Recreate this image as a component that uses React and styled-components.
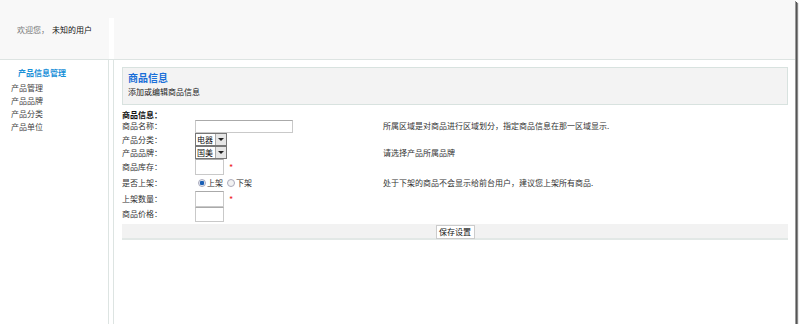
import React from 'react'
import styled, { createGlobalStyle } from 'styled-components'

const GlobalStyle = createGlobalStyle`
  html, body {
    margin: 0;
    padding: 0;
    background: #fff;
  }
  body {
    font-family: "Noto Sans CJK SC", "Noto Sans", sans-serif;
    font-size: 8px;
    color: #333;
  }
`

const Frame = styled.div`
  width: 795px;
  height: 324px;
  display: flex;
  flex-direction: column;
  background: #fff;
  box-shadow: 1px 1px 0 #9a9a9a, 2px 2px 0 #555, 3px 3px 1px #888;
  overflow: hidden;
`

const Header = styled.div`
  height: 59px;
  flex: none;
  display: grid;
  grid-template-columns: 109px 5px 1fr;
  background: #f8f8f8;
  border-bottom: 1px solid #dde4e2;
`

const Welcome = styled.div`
  padding: 25px 0 0 17px;
  line-height: 10px;
  color: #777;
  white-space: nowrap;
`

const UserName = styled.span`
  margin-left: 3px;
  color: #111;
`

const HeaderGap = styled.div`
  margin-top: 18px;
  background: #fff;
`

const Body = styled.div`
  flex: 1;
  display: flex;
  min-height: 0;
`

const Sidebar = styled.div`
  width: 108px;
  flex: none;
  border-right: 1px solid #dde4e2;
  padding-top: 7px;
`

const SideTitle = styled.div`
  padding-left: 18px;
  line-height: 12px;
  font-weight: bold;
  color: #1a90d8;
  margin-bottom: 2px;
`

const SideItem = styled.div`
  padding-left: 11px;
  line-height: 13px;
  color: #444;
`

const Main = styled.div`
  flex: 1;
  margin-left: 4px;
  border-left: 1px solid #dde4e2;
  padding: 7px 7px 0 8px;
`

const TitleBox = styled.div`
  height: 38px;
  box-sizing: border-box;
  background: #f3f3f3;
  border: 1px solid #d8e2df;
  padding: 4px 5px 0 5px;
`

const Title = styled.div`
  font-size: 10px;
  line-height: 12px;
  font-weight: bold;
  color: #1a6fd8;
`

const Subtitle = styled.div`
  margin-top: 3px;
  line-height: 10px;
  color: #222;
`

const FormHead = styled.div`
  margin-top: 5px;
  line-height: 9px;
  font-weight: bold;
  color: #111;
`

const Row = styled.div`
  display: grid;
  grid-template-columns: 73px 188px 1fr;
  align-items: center;
  height: ${p => p.$h}px;
`

const Label = styled.div`
  line-height: 10px;
  color: #333;
`

const Field = styled.div`
  display: flex;
  align-items: center;
  gap: 4px;
`

const Hint = styled.div`
  line-height: 10px;
  color: #333;
  white-space: nowrap;
`

const TextInput = styled.div`
  width: ${p => p.$w}px;
  height: ${p => p.$h}px;
  box-sizing: border-box;
  border: 1px solid #c9c9c9;
  border-top-color: #aaa;
  background: #fff;
`

const Star = styled.span`
  color: #e22;
  font-size: 9px;
  line-height: 9px;
  margin-left: 1px;
`

const SelectBox = styled.div`
  width: 32px;
  height: 13px;
  box-sizing: border-box;
  border: 1px solid #777;
  display: flex;
  background: #fff;
`

const SelectText = styled.div`
  flex: 1;
  line-height: 11px;
  padding-left: 1px;
  color: #111;
`

const SelectBtn = styled.div`
  width: 10px;
  background: #e6e6e6;
  border-left: 1px solid #aaa;
  display: flex;
  align-items: center;
  justify-content: center;
  &::after {
    content: '';
    border-left: 3px solid transparent;
    border-right: 3px solid transparent;
    border-top: 3px solid #222;
  }
`

const RadioGroup = styled.div`
  display: flex;
  align-items: center;
  padding-left: 3px;
`

const Radio = styled.span`
  width: 8px;
  height: 8px;
  box-sizing: border-box;
  border-radius: 50%;
  border: 1px solid #aab;
  background: ${p => (p.$on ? 'radial-gradient(circle, #1a5fb4 0 2px, #dfe8f5 2.5px)' : '#f2f2f2')};
  margin-right: 1px;
`

const RadioLabel = styled.span`
  line-height: 10px;
  color: #333;
  margin-right: 4px;
`

const ButtonBar = styled.div`
  margin-top: 2px;
  height: 16px;
  box-sizing: border-box;
  background: #f2f2f2;
  border-bottom: 2px solid #e2e8e6;
  display: flex;
  justify-content: center;
  align-items: flex-start;
  padding-top: 1px;
`

const SaveButton = styled.div`
  width: 39px;
  height: 14px;
  box-sizing: border-box;
  border: 1px solid #ccc;
  background: #fff;
  line-height: 12px;
  text-align: center;
  color: #111;
`

const Select = ({ value }) => (
  <SelectBox>
    <SelectText>{value}</SelectText>
    <SelectBtn />
  </SelectBox>
)

export default function App() {
  return (
    <>
      <GlobalStyle />
      <Frame>
        <Header>
          <Welcome>
            欢迎您，<UserName>未知的用户</UserName>
          </Welcome>
          <HeaderGap />
          <div />
        </Header>
        <Body>
          <Sidebar>
            <SideTitle>产品信息管理</SideTitle>
            <SideItem>产品管理</SideItem>
            <SideItem>产品品牌</SideItem>
            <SideItem>产品分类</SideItem>
            <SideItem>产品单位</SideItem>
          </Sidebar>
          <Main>
            <TitleBox>
              <Title>商品信息</Title>
              <Subtitle>添加或编辑商品信息</Subtitle>
            </TitleBox>
            <FormHead>商品信息：</FormHead>
            <Row $h={14}>
              <Label>商品名称：</Label>
              <Field><TextInput $w={98} $h={13} /></Field>
              <Hint>所属区域是对商品进行区域划分，指定商品信息在那一区域显示.</Hint>
            </Row>
            <Row $h={13}>
              <Label>产品分类：</Label>
              <Field><Select value="电器" /></Field>
              <div />
            </Row>
            <Row $h={13}>
              <Label>产品品牌：</Label>
              <Field><Select value="国美" /></Field>
              <Hint>请选择产品所属品牌</Hint>
            </Row>
            <Row $h={16}>
              <Label>商品库存：</Label>
              <Field><TextInput $w={29} $h={16} /><Star>*</Star></Field>
              <div />
            </Row>
            <Row $h={16}>
              <Label>是否上架：</Label>
              <RadioGroup>
                <Radio $on />
                <RadioLabel>上架</RadioLabel>
                <Radio />
                <RadioLabel>下架</RadioLabel>
              </RadioGroup>
              <Hint>处于下架的商品不会显示给前台用户，建议您上架所有商品.</Hint>
            </Row>
            <Row $h={15}>
              <Label>上架数量：</Label>
              <Field><TextInput $w={29} $h={16} /><Star>*</Star></Field>
              <div />
            </Row>
            <Row $h={16}>
              <Label>商品价格：</Label>
              <Field><TextInput $w={29} $h={15} /></Field>
              <div />
            </Row>
            <ButtonBar>
              <SaveButton>保存设置</SaveButton>
            </ButtonBar>
          </Main>
        </Body>
      </Frame>
    </>
  )
}
